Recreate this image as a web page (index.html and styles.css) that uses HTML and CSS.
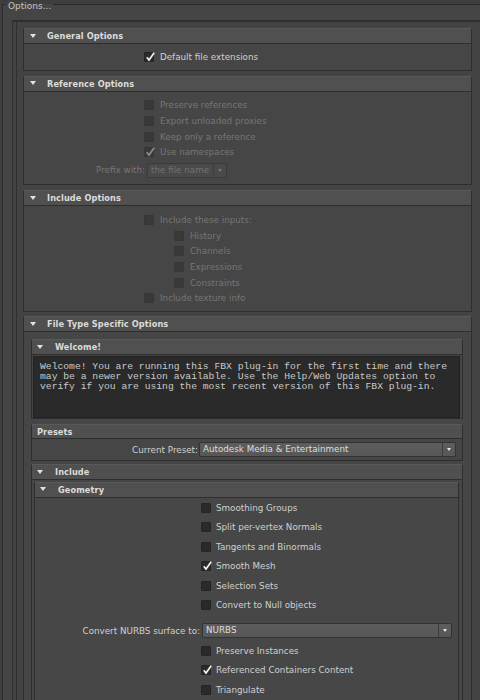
FILE: index.html
```html
<!DOCTYPE html>
<html>
<head>
<meta charset="utf-8">
<link rel="stylesheet" href="styles.css">
</head>
<body>
<fieldset class="options">
  <legend>Options...</legend>
  <div class="scroll">
    <div class="scroll-inner">

      <section class="sec">
        <div class="sec-head"><span class="tri"></span>General Options</div>
        <div class="sec-body top-body general">
          <div class="row"><span class="cb on"><svg viewBox="0 0 10 10"><path d="M1.8 5.2 L4 8 L9.2 0.8"/></svg></span>Default file extensions</div>
        </div>
      </section>

      <section class="sec">
        <div class="sec-head"><span class="tri"></span>Reference Options</div>
        <div class="sec-body top-body disabled refs">
          <div class="row"><span class="cb"></span>Preserve references</div>
          <div class="row"><span class="cb"></span>Export unloaded proxies</div>
          <div class="row"><span class="cb"></span>Keep only a reference</div>
          <div class="row"><span class="cb on"><svg viewBox="0 0 10 10"><path d="M1.8 5.2 L4 8 L9.2 0.8"/></svg></span>Use namespaces</div>
          <div class="lrow prefix">
            <span class="lbl">Prefix with:</span>
            <div class="dd dd-off small"><span class="dd-text">the file name</span><span class="dd-arrow"><span class="dtri"></span></span></div>
          </div>
        </div>
      </section>

      <section class="sec incl-opts">
        <div class="sec-head"><span class="tri"></span>Include Options</div>
        <div class="sec-body top-body disabled">
          <div class="row"><span class="cb"></span>Include these inputs:</div>
          <div class="row sub"><span class="cb"></span>History</div>
          <div class="row sub"><span class="cb"></span>Channels</div>
          <div class="row sub"><span class="cb"></span>Expressions</div>
          <div class="row sub"><span class="cb"></span>Constraints</div>
          <div class="row"><span class="cb"></span>Include texture info</div>
        </div>
      </section>

      <section class="sec">
        <div class="sec-head"><span class="tri"></span>File Type Specific Options</div>
        <div class="sec-body fts-body">

          <section class="sec nsec">
            <div class="sec-head"><span class="tri"></span>Welcome!</div>
            <div class="sec-body welcome-body">
              <div class="textarea">Welcome! You are running this FBX plug-in for the first time and there
may be a newer version available. Use the Help/Web Updates option to
verify if you are using the most recent version of this FBX plug-in.</div>
            </div>
          </section>

          <section class="sec nsec presets">
            <div class="sec-head plain">Presets</div>
            <div class="sec-body presets-body">
              <span class="lbl">Current Preset:</span>
              <div class="dd"><span class="dd-text">Autodesk Media &amp; Entertainment</span><span class="dd-arrow"><span class="dtri"></span></span></div>
            </div>
          </section>

          <section class="sec nsec">
            <div class="sec-head"><span class="tri"></span>Include</div>
            <div class="sec-body include-body">

              <section class="sec nsec">
                <div class="sec-head"><span class="tri"></span>Geometry</div>
                <div class="sec-body geo-body">
                  <div class="grow"><span class="cb"></span>Smoothing Groups</div>
                  <div class="grow"><span class="cb"></span>Split per-vertex Normals</div>
                  <div class="grow"><span class="cb"></span>Tangents and Binormals</div>
                  <div class="grow"><span class="cb on"><svg viewBox="0 0 10 10"><path d="M1.8 5.2 L4 8 L9.2 0.8"/></svg></span>Smooth Mesh</div>
                  <div class="grow"><span class="cb"></span>Selection Sets</div>
                  <div class="grow"><span class="cb"></span>Convert to Null objects</div>
                  <div class="nurbs">
                    <span class="lbl">Convert NURBS surface to:</span>
                    <div class="dd"><span class="dd-text">NURBS</span><span class="dd-arrow"><span class="dtri"></span></span></div>
                  </div>
                  <div class="grow"><span class="cb"></span>Preserve Instances</div>
                  <div class="grow"><span class="cb on"><svg viewBox="0 0 10 10"><path d="M1.8 5.2 L4 8 L9.2 0.8"/></svg></span>Referenced Containers Content</div>
                  <div class="grow"><span class="cb"></span>Triangulate</div>
                </div>
              </section>

            </div>
          </section>

        </div>
      </section>

    </div>
  </div>
</fieldset>
</body>
</html>
```

FILE: styles.css
```css
* { box-sizing: border-box; }

html, body {
  margin: 0;
  padding: 0;
}

body {
  width: 480px;
  height: 700px;
  overflow: hidden;
  background: #3e3e3e;
  font-family: "DejaVu Sans", "Liberation Sans", sans-serif;
  font-size: 8.75px;
  color: #d0d0d0;
}

.options {
  margin: -1.5px 0 0 2px;
  padding: 0;
  border: 0;
  border-top: 1px solid #2c2c2c;
  border-left: 1px solid #2c2c2c;
  background: #454545;
  min-width: 0;
  height: 720px;
}

.options legend {
  margin-left: 3px;
  padding: 3px 2px 0 2px;
  font-size: 9px;
  line-height: 9px;
  color: #c4c4c4;
}

.scroll {
  margin: 9.5px 0 0 9px;
  border-top: 2px solid #2f2f2f;
  border-left: 1px solid #2f2f2f;
  background: #434343;
  height: 700px;
}

.scroll-inner {
  margin-left: 3px;
  border-left: 1px solid #303030;
  padding: 6px 8px 0 6px;
  height: 700px;
}

.sec {
  margin-bottom: 5px;
}

.sec.incl-opts {
  margin-bottom: 4px;
}

.sec-head {
  height: 16px;
  display: flex;
  align-items: center;
  padding-left: 6px;
  background: #505050;
  border: 1px solid #2e2e2e;
  border-top-color: #595959;
  font-weight: bold;
  font-size: 8.2px;
  color: #dcdcdc;
  letter-spacing: 0.1px;
}

.sec-head.plain {
  padding-left: 7px;
  height: 15px;
}

.tri {
  width: 0;
  height: 0;
  border-left: 3.5px solid transparent;
  border-right: 3.5px solid transparent;
  border-top: 4px solid #e2e2e2;
  margin-right: 11px;
  margin-top: -1px;
}

.sec-body {
  border: 1px solid #2e2e2e;
  border-top: 0;
  background: #464646;
}

.top-body {
  display: flex;
  flex-direction: column;
  padding: 6px 0 5px 0;
}

.top-body.general {
  padding: 5px 0 5px 0;
}

.top-body.refs {
  padding: 6px 0 6.5px 0;
}

.row {
  display: flex;
  align-items: center;
  height: 15.6px;
  padding-left: 120px;
}

.row.sub {
  padding-left: 150px;
}

.cb {
  width: 10px;
  height: 10px;
  flex: none;
  background: #2a2a2a;
  border: 1px solid #252525;
  border-radius: 1px;
  margin-right: 6px;
  position: relative;
}

.cb svg {
  position: absolute;
  left: 0;
  top: -1px;
  width: 10px;
  height: 10px;
  overflow: visible;
}

.cb svg path {
  fill: none;
  stroke: #f2f2f2;
  stroke-width: 1.7;
}

.disabled {
  color: #767676;
}

.disabled .cb {
  background: #393939;
  border-color: #363636;
}

.disabled .cb svg path {
  stroke: #8c8c8c;
}

.lrow {
  display: flex;
  align-items: center;
  margin-top: 3px;
}

.lbl {
  flex: none;
  text-align: right;
}

.prefix .lbl {
  width: 121px;
  margin-right: 2px;
}

.dd {
  display: flex;
  height: 15px;
  flex: 1;
  background: linear-gradient(#5d5d5d, #575757);
  border: 1px solid #333;
  border-radius: 2px;
  color: #dedede;
}

.dd-text {
  flex: 1;
  padding-left: 3px;
  line-height: 13px;
  white-space: nowrap;
  overflow: hidden;
}

.dd-arrow {
  width: 13px;
  flex: none;
  border-left: 1px solid #3c3c3c;
  display: flex;
  align-items: center;
  justify-content: center;
}

.dtri {
  width: 0;
  height: 0;
  border-left: 2.5px solid transparent;
  border-right: 2.5px solid transparent;
  border-top: 3px solid #e6e6e6;
}

.dd.small {
  flex: none;
  width: 80px;
}

.dd-off {
  background: #4a4a4a;
  border-color: #3a3a3a;
  color: #727272;
}

.dd-off .dd-arrow {
  border-left-color: #3d3d3d;
}

.dd-off .dtri {
  border-top-color: #7a7a7a;
}

.fts-body {
  padding: 7px 8px 0 7px;
  height: 400px;
}

.nsec {
  margin-bottom: 5px;
}

.nsec .sec-head {
  padding-left: 5px;
}

.nsec .sec-head .tri {
  margin-right: 12px;
}

.welcome-body {
  padding: 1px 2px 0 1px;
}

.textarea {
  height: 62px;
  background: #2a2a2a;
  border: 1px solid #222;
  padding: 5px 6px;
  font-family: "Liberation Mono", "DejaVu Sans Mono", monospace;
  font-size: 9.7px;
  line-height: 10px;
  color: #c9c9c9;
  white-space: pre;
}

.presets {
  margin-bottom: 3px;
}

.presets-body {
  display: flex;
  align-items: center;
  padding: 3px 6px 3px 0;
}

.presets-body .lbl {
  width: 166px;
  margin-right: 1px;
}

.include-body {
  padding: 1.5px 3px 0 2px;
  height: 260px;
}

.geo-body {
  padding: 0.5px 6px 0 0;
  display: flex;
  flex-direction: column;
  background: #474747;
}

.grow {
  display: flex;
  align-items: center;
  height: 19.5px;
  padding-left: 166px;
}

.grow .cb {
  margin-right: 5px;
}

.nurbs {
  display: flex;
  align-items: center;
  margin: 8px 0 3px 0;
}

.nurbs .lbl {
  width: 165px;
  margin-right: 2px;
}
```
